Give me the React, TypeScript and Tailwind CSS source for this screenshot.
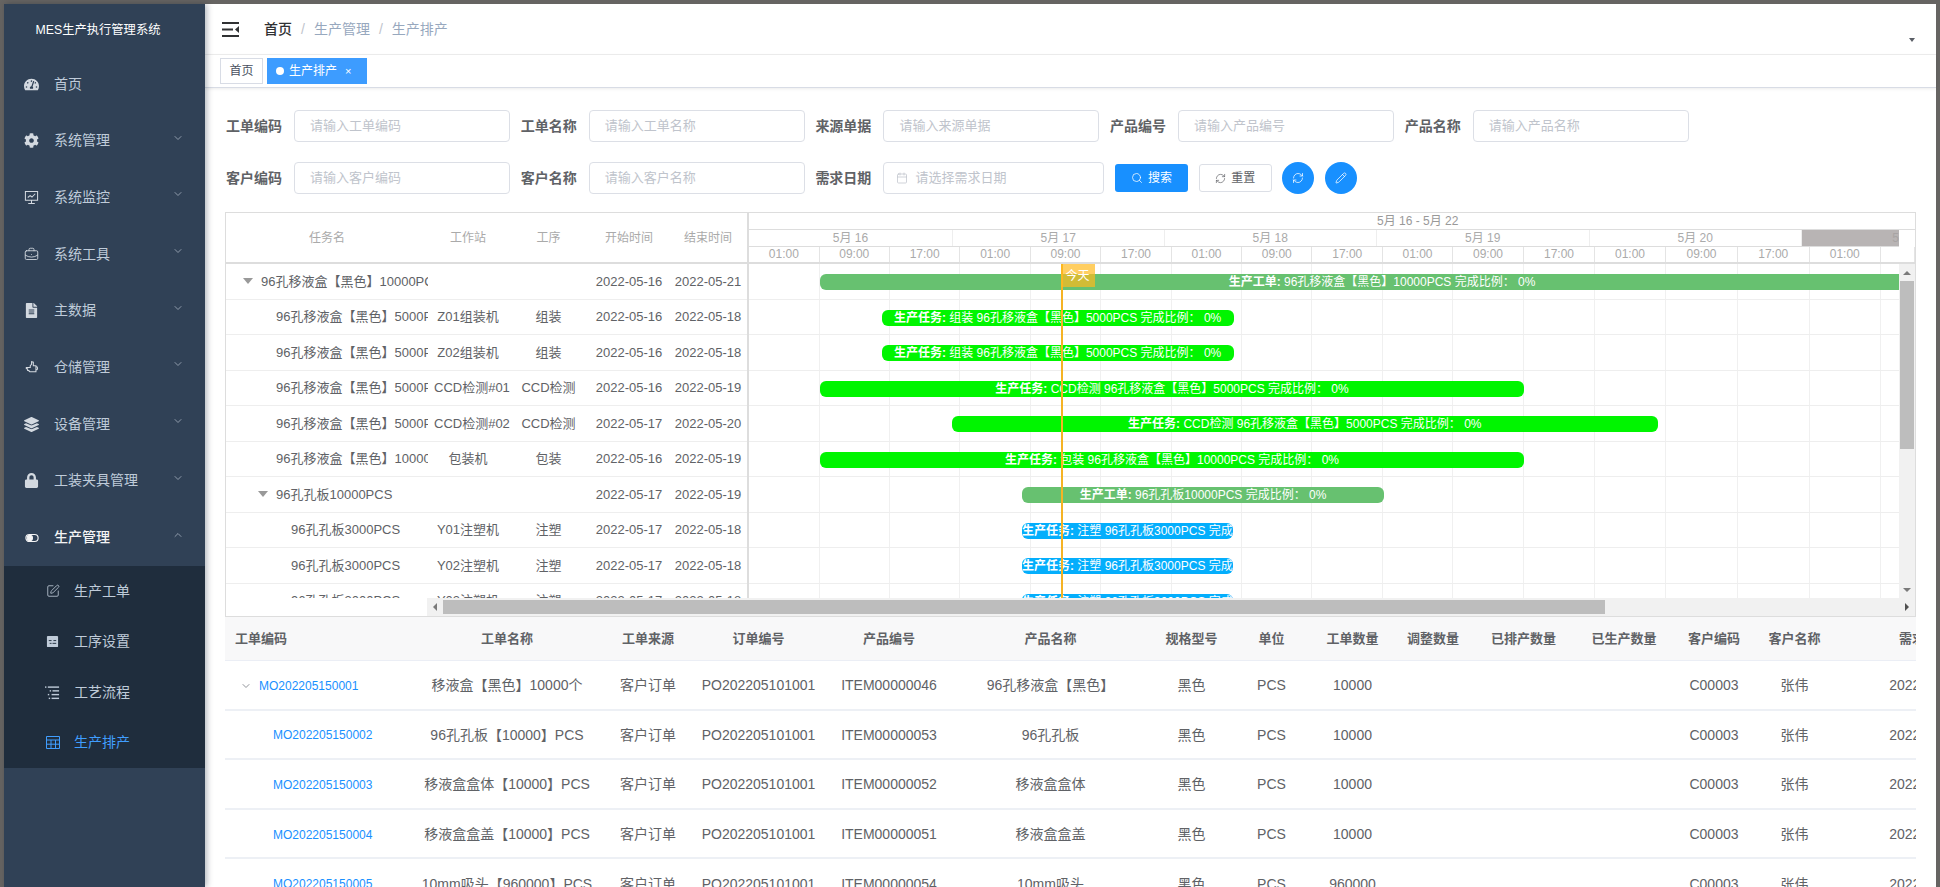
import React from 'react';
import { BriefcaseBusiness, Calendar, ChevronDown, ChevronUp, Pencil, RefreshCw, Search, SquarePen } from 'lucide-react';
import { FaCog, FaFileAlt, FaLayerGroup, FaLock, FaTachometerAlt } from 'react-icons/fa';

const MonitorIcon = () => (
  <svg width="15" height="15" viewBox="0 0 16 16" fill="none" stroke="currentColor" strokeWidth="1.1">
    <path d="M1.5 1.5h13v9.5h-13zM8 11v3M4.5 14.5h7M4 8l2.5-2 2 1.500 3.500-3.500" />
  </svg>
);

const HandIcon = () => (
  <svg width="14" height="14" viewBox="0 0 16 16" fill="none" stroke="currentColor" strokeWidth="1.2">
    <path d="M6 6.500l1.500-1.500V2l2 .5V6.500h3V13.500H6c-1 0-1.500-.5-1.500-1.500H3V10H1.500V8.500H6zM12.500 7.500c2.500 0 2.500 4 0 4" />
  </svg>
);

const ToggleIcon = () => (
  <svg width="14" height="14" viewBox="0 0 16 16" fill="none" stroke="currentColor" strokeWidth="1.3">
    <rect x="1" y="4" width="14" height="8" rx="4" />
    <circle cx="5.500" cy="8" r="3" fill="currentColor" />
  </svg>
);

const CardIcon = () => (
  <svg width="13" height="13" viewBox="0 0 14 14">
    <rect x="1" y="1" width="12" height="12" rx="1" fill="currentColor" />
    <path d="M3 6h3M8 6h3M4 9h2M7 9h4" stroke="#1f2d3d" strokeWidth="1" />
  </svg>
);

const ListIcon = () => (
  <svg width="16" height="15" viewBox="0 0 16 15" fill="currentColor">
    <rect x="0" y="1" width="1.500" height="1.500" />
    <rect x="3" y="1" width="12" height="1.500" />
    <rect x="5" y="5" width="1.500" height="1.500" />
    <rect x="8" y="5" width="7" height="1.500" />
    <rect x="3" y="9" width="1.500" height="1.500" />
    <rect x="7" y="9" width="8" height="1.500" />
    <rect x="4" y="13" width="1.500" height="1.500" />
    <rect x="7" y="13" width="8" height="1.500" />
  </svg>
);

const TableIcon = () => (
  <svg width="14" height="13" viewBox="0 0 14 13" fill="none" stroke="currentColor" strokeWidth="1">
    <path d="M.5.5h13v12H.5zM.5 4h13M.5 8.200h13M5 4v8.500M9.500 4v8.500" />
  </svg>
);

const HamburgerIcon = () => (
  <svg width="18" height="15" viewBox="0 0 18 15" fill="#303133">
    <rect x="0" y="0" width="17" height="2" />
    <rect x="0" y="6.500" width="11" height="2" />
    <rect x="0" y="13" width="17" height="2" />
    <path d="M17 4v7l-4-3.500z" />
  </svg>
);

const menus = [
  { name: '首页', icon: <FaTachometerAlt size={15} /> },
  { name: '系统管理', icon: <FaCog size={15} />, arrow: true },
  { name: '系统监控', icon: <MonitorIcon />, arrow: true },
  { name: '系统工具', icon: <BriefcaseBusiness size={15} strokeWidth={1.4} />, arrow: true },
  { name: '主数据', icon: <FaFileAlt size={15} />, arrow: true },
  { name: '仓储管理', icon: <HandIcon />, arrow: true },
  { name: '设备管理', icon: <FaLayerGroup size={15} />, arrow: true },
  { name: '工装夹具管理', icon: <FaLock size={15} />, arrow: true },
];

const subMenus = [
  { name: '生产工单', icon: <SquarePen size={14} strokeWidth={1.4} /> },
  { name: '工序设置', icon: <CardIcon /> },
  { name: '工艺流程', icon: <ListIcon /> },
  { name: '生产排产', icon: <TableIcon />, active: true },
];

const filterRow1 = [
  ['工单编码', '请输入工单编码'],
  ['工单名称', '请输入工单名称'],
  ['来源单据', '请输入来源单据'],
  ['产品编号', '请输入产品编号'],
  ['产品名称', '请输入产品名称'],
];

const filterRow2 = [
  ['客户编码', '请输入客户编码'],
  ['客户名称', '请输入客户名称'],
];

const ticks = [70.6, 70.4, 70.4, 70.6, 70, 71, 70, 70.5, 70.5, 70, 71, 71, 71, 72, 71.6, 71.4, 34];
const tickLabels = ['01:00', '09:00', '17:00', '01:00', '09:00', '17:00', '01:00', '09:00', '17:00', '01:00', '09:00', '17:00', '01:00', '09:00', '17:00', '01:00', ''];

const days = [
  { label: '5月 16', width: 204 },
  { label: '5月 17', width: 211.5 },
  { label: '5月 18', width: 212.5 },
  { label: '5月 19', width: 212.5 },
  { label: '5月 20', width: 212.5 },
];

const ORDER = 'bg-[#67c170]';
const TASK = 'bg-[#00f500]';
const INJECT = 'bg-[#04aefc]';

const tasks = [
  { name: '96孔移液盒【黑色】10000PCS', level: 0, station: '', step: '', start: '2022-05-16', end: '2022-05-21', left: 71, width: 1124, color: ORDER, text: '生产工单: 96孔移液盒【黑色】10000PCS 完成比例： 0%' },
  { name: '96孔移液盒【黑色】5000PCS', level: 1, station: 'Z01组装机', step: '组装', start: '2022-05-16', end: '2022-05-18', left: 132.6, width: 352, color: TASK, text: '生产任务: 组装 96孔移液盒【黑色】5000PCS 完成比例： 0%' },
  { name: '96孔移液盒【黑色】5000PCS', level: 1, station: 'Z02组装机', step: '组装', start: '2022-05-16', end: '2022-05-18', left: 132.6, width: 352, color: TASK, text: '生产任务: 组装 96孔移液盒【黑色】5000PCS 完成比例： 0%' },
  { name: '96孔移液盒【黑色】5000PCS', level: 1, station: 'CCD检测#01', step: 'CCD检测', start: '2022-05-16', end: '2022-05-19', left: 71, width: 704, color: TASK, text: '生产任务: CCD检测 96孔移液盒【黑色】5000PCS 完成比例： 0%' },
  { name: '96孔移液盒【黑色】5000PCS', level: 1, station: 'CCD检测#02', step: 'CCD检测', start: '2022-05-17', end: '2022-05-20', left: 202.6, width: 706.4, color: TASK, text: '生产任务: CCD检测 96孔移液盒【黑色】5000PCS 完成比例： 0%' },
  { name: '96孔移液盒【黑色】10000PCS', level: 1, station: '包装机', step: '包装', start: '2022-05-16', end: '2022-05-19', left: 71, width: 704, color: TASK, text: '生产任务: 包装 96孔移液盒【黑色】10000PCS 完成比例： 0%' },
  { name: '96孔孔板10000PCS', level: 1, parent: true, station: '', step: '', start: '2022-05-17', end: '2022-05-19', left: 273, width: 362, color: ORDER, text: '生产工单: 96孔孔板10000PCS 完成比例： 0%' },
  { name: '96孔孔板3000PCS', level: 2, station: 'Y01注塑机', step: '注塑', start: '2022-05-17', end: '2022-05-18', left: 273, width: 211, color: INJECT, text: '生产任务: 注塑 96孔孔板3000PCS 完成比例： 0%' },
  { name: '96孔孔板3000PCS', level: 2, station: 'Y02注塑机', step: '注塑', start: '2022-05-17', end: '2022-05-18', left: 273, width: 211, color: INJECT, text: '生产任务: 注塑 96孔孔板3000PCS 完成比例： 0%' },
  { name: '96孔孔板3000PCS', level: 2, station: 'Y03注塑机', step: '注塑', start: '2022-05-17', end: '2022-05-18', left: 273, width: 211, color: INJECT, text: '生产任务: 注塑 96孔孔板3000PCS 完成比例： 0%' },
];

const tableHead = ['工单编码', '工单名称', '工单来源', '订单编号', '产品编号', '产品名称', '规格型号', '单位', '工单数量', '调整数量', '已排产数量', '已生产数量', '客户编码', '客户名称', '需求日期'];

const orders = [
  ['MO202205150001', '移液盒【黑色】10000个', 'ITEM00000046', '96孔移液盒【黑色】', '10000'],
  ['MO202205150002', '96孔孔板【10000】PCS', 'ITEM00000053', '96孔孔板', '10000'],
  ['MO202205150003', '移液盒盒体【10000】PCS', 'ITEM00000052', '移液盒盒体', '10000'],
  ['MO202205150004', '移液盒盒盖【10000】PCS', 'ITEM00000051', '移液盒盒盖', '10000'],
  ['MO202205150005', '10mm吸头【960000】PCS', 'ITEM00000054', '10mm吸头', '960000'],
];

const COLS = 'grid grid-cols-[181px_202px_80px_141px_120px_203px_79px_81px_81px_80px_101px_100px_80px_81px_180px]';

function Filter({ label, placeholder }: { label: string; placeholder: string }) {
  return (
    <div className="flex items-center">
      <label className="w-[68px] text-[14px] font-bold text-[#606266]">{label}</label>
      <div className="flex h-[32px] w-[216px] items-center rounded border border-[#dcdfe6] bg-white pl-[15px] text-[13px] text-[#c0c4cc]">{placeholder}</div>
    </div>
  );
}

export default function App() {
  return (
    <div className="flex h-[887px] w-[1940px] flex-col overflow-hidden bg-[#666462] pt-[4px] pl-[4px] pr-[4px] font-['Liberation_Sans','Noto_Sans_CJK_SC',sans-serif]">
      <div className="flex min-h-0 flex-1">
        {/* Sidebar */}
        <aside className="z-10 w-[201px] shrink-0 bg-[#304156] shadow-[2px_0_6px_rgba(0,21,41,0.3)]">
          <div className="flex h-[51.7px] items-center justify-center pr-[13px] text-[12.3px] text-white">MES生产执行管理系统</div>
          {menus.map(m => (
            <div key={m.name} className="flex h-[56.7px] items-center pl-[20px] pr-[21px] text-[14px] text-[#bfcbd9]">
              <span className="flex w-[15px] justify-center text-[#d3d9e0]">{m.icon}</span>
              <span className="ml-[15px] flex-1">{m.name}</span>
              {m.arrow && <ChevronDown size={12} className="mb-[6px] text-[#8f9bab]" />}
            </div>
          ))}
          <div className="flex h-[56.7px] items-center pl-[20px] pr-[21px] text-[14px] text-[#f4f4f5]">
            <span className="flex w-[15px] justify-center"><ToggleIcon /></span>
            <span className="ml-[15px] flex-1 font-medium">生产管理</span>
            <ChevronUp size={12} className="mb-[6px] text-[#8f9bab]" />
          </div>
          <div className="bg-[#1f2d3d]">
            {subMenus.map(s => (
              <div key={s.name} className={s.active ? 'flex h-[50.5px] items-center pl-[41px] text-[14px] text-[#409eff]' : 'flex h-[50.5px] items-center pl-[41px] text-[14px] text-[#bfcbd9]'}>
                <span className="flex w-[15px] justify-center">{s.icon}</span>
                <span className="ml-[14px]">{s.name}</span>
              </div>
            ))}
          </div>
        </aside>

        <main className="flex min-w-0 flex-1 flex-col bg-white">
          {/* Navbar */}
          <div className="flex h-[51px] shrink-0 items-center border-b border-[#eeeeee] pl-[17px] pr-[21px]">
            <HamburgerIcon />
            <div className="ml-[24px] flex flex-1 items-center text-[14px]">
              <span className="font-medium text-[#303133]">首页</span>
              <span className="mx-[9px] text-[#c0c4cc]">/</span>
              <span className="text-[#97a8be]">生产管理</span>
              <span className="mx-[9px] text-[#c0c4cc]">/</span>
              <span className="text-[#97a8be]">生产排产</span>
            </div>
            <div className="mt-[22px] border-x-[3px] border-t-[4px] border-x-transparent border-t-[#5a5e66]" />
          </div>

          {/* Tabs */}
          <div className="flex h-[33px] shrink-0 items-center gap-[4px] border-b border-[#d8dce5] pl-[15px] shadow-[0_1px_3px_rgba(0,0,0,0.08)]">
            <div className="flex h-[26px] w-[43px] items-center justify-center border border-[#d8dce5] text-[12px] text-[#495060]">首页</div>
            <div className="flex h-[26px] w-[100px] items-center bg-[#3d9cff] pl-[9px] text-[12px] text-white">
              <span className="h-[8px] w-[8px] rounded-full bg-white" />
              <span className="ml-[5px]">生产排产</span>
              <span className="ml-[8px] text-[11px]">×</span>
            </div>
          </div>

          <div className="flex min-h-0 flex-1 flex-col px-[20px] pt-[22px]">
            {/* Search form */}
            <div className="flex flex-col gap-[20px] pl-[1px]">
              <div className="flex gap-[10.7px]">
                {filterRow1.map(f => <Filter key={f[0]} label={f[0]} placeholder={f[1]} />)}
              </div>
              <div className="flex items-center gap-[10.7px]">
                {filterRow2.map(f => <Filter key={f[0]} label={f[0]} placeholder={f[1]} />)}
                <div className="flex items-center">
                  <label className="w-[68px] text-[14px] font-bold text-[#606266]">需求日期</label>
                  <div className="flex h-[32px] w-[221px] items-center rounded border border-[#dcdfe6] pl-[12px] text-[13px] text-[#c0c4cc]">
                    <Calendar size={12} strokeWidth={1.5} />
                    <span className="ml-[7px]">请选择需求日期</span>
                  </div>
                </div>
                <button className="flex h-[28px] w-[73px] items-center justify-center gap-[5px] rounded-[3px] bg-[#1890ff] text-[12px] text-white">
                  <Search size={12} strokeWidth={1.5} />搜索
                </button>
                <button className="flex h-[28px] w-[73px] items-center justify-center gap-[5px] rounded-[3px] border border-[#dcdfe6] bg-white text-[12px] text-[#606266]">
                  <RefreshCw size={11} strokeWidth={1.5} />重置
                </button>
                <button className="flex h-[32px] w-[32px] items-center justify-center rounded-full bg-[#1890ff] text-white">
                  <RefreshCw size={12} strokeWidth={1.5} />
                </button>
                <button className="flex h-[32px] w-[32px] items-center justify-center rounded-full bg-[#1890ff] text-white">
                  <Pencil size={12} strokeWidth={1.5} />
                </button>
              </div>
            </div>

            {/* Gantt */}
            <div className="mt-[18px] flex h-[405px] shrink-0 flex-col border border-[#dddddd]">
              <div className="flex h-[385px] min-h-0">
                <div className="w-[523px] shrink-0 border-r-2 border-[#dddddd]">
                  <div className="flex h-[51px] items-center border-b-2 border-[#dddddd] text-[12px] text-[#aaaaaa]">
                    <div className="w-[202px] text-center">任务名</div>
                    <div className="w-[80px] text-center">工作站</div>
                    <div className="w-[81px] text-center">工序</div>
                    <div className="w-[80px] text-center">开始时间</div>
                    <div className="w-[78px] text-center">结束时间</div>
                  </div>
                  <div className="h-[334px] overflow-hidden">
                    {tasks.map((t, i) => (
                      <div key={i} className="flex h-[35.5px] shrink-0 items-center border-b border-[#eeeeee] text-[13px] text-[#606266]">
                        <div className={t.level === 0 ? 'flex w-[202px] items-center overflow-hidden whitespace-nowrap pl-[17px]' : t.level === 2 ? 'flex w-[202px] items-center overflow-hidden whitespace-nowrap pl-[65px]' : t.parent ? 'flex w-[202px] items-center overflow-hidden whitespace-nowrap pl-[32px]' : 'flex w-[202px] items-center overflow-hidden whitespace-nowrap pl-[50px]'}>
                          {(t.level === 0 || t.parent) && <span className="mr-[8px] shrink-0 border-x-[5px] border-t-[6px] border-x-transparent border-t-[#999999]" />}
                          <span>{t.name}</span>
                        </div>
                        <div className="w-[80px] whitespace-nowrap px-[6px] text-center">{t.station}</div>
                        <div className="w-[81px] whitespace-nowrap text-center">{t.step}</div>
                        <div className="w-[80px] text-center">{t.start}</div>
                        <div className="w-[78px] text-center">{t.end}</div>
                      </div>
                    ))}
                  </div>
                </div>

                <div className="flex min-w-0 flex-1 flex-col">
                  {/* Time scale */}
                  <div className="h-[51px] shrink-0 border-b-2 border-[#dddddd] text-[12px] text-[#aaaaaa]">
                    <div className="flex h-[17px] items-center border-b border-[#dddddd] pl-[628px] text-[#999999]">5月 16 - 5月 22</div>
                    <div className="h-[16.5px] w-[1150px] overflow-hidden border-b border-[#dddddd]">
                      <div className="flex h-full w-[1400px]">
                        {days.map(d => (
                          <div key={d.label} className="flex items-center justify-center border-r border-[#eeeeee]" style={{ width: d.width }}>{d.label}</div>
                        ))}
                        <div className="flex w-[216px] items-center justify-center bg-[#b8b4b4] text-[#a8a4a4]">5月 21</div>
                      </div>
                    </div>
                    <div className="flex h-[15.5px]">
                      {ticks.map((w, i) => (
                        <div key={i} className="flex shrink-0 items-center justify-center border-r border-[#e4e4e4]" style={{ width: w }}>{tickLabels[i]}</div>
                      ))}
                    </div>
                  </div>

                  <div className="flex min-h-0 flex-1">
                    <div className="relative w-[1150px] shrink-0 overflow-hidden">
                      {tasks.map((t, i) => (
                        <div key={i} className="relative flex h-[35.5px] border-b border-[#eeeeee]">
                          {ticks.map((w, j) => (
                            <div key={j} className="h-full shrink-0 border-r border-[#f0f0f0]" style={{ width: w }} />
                          ))}
                          <div className={`absolute top-[10px] h-[16px] overflow-hidden whitespace-nowrap rounded-[6px] text-center text-[12px] leading-[16px] text-white ${t.color}`} style={{ left: t.left, width: t.width }}>
                            <span className="font-bold">{t.text.slice(0, 5)}</span>{t.text.slice(5)}
                          </div>
                        </div>
                      ))}
                      <div className="absolute left-[312px] top-0 h-full w-[2px] bg-[#f5b324]" />
                      <div className="absolute left-[311.5px] top-0 flex h-[23px] w-[34px] items-center justify-center bg-[#ffb91e]/70 text-[12px] text-white">今天</div>
                    </div>
                    {/* Vertical scrollbar */}
                    <div className="flex w-[16px] flex-col items-center bg-[#f1f1f1]">
                      <div className="flex h-[17px] items-center">
                        <span className="border-x-[4px] border-b-[4px] border-x-transparent border-b-[#7a7a7a]" />
                      </div>
                      <div className="h-[168px] w-[14px] bg-[#bdbdbd]" />
                      <div className="mt-auto flex h-[17px] items-center">
                        <span className="border-x-[4px] border-t-[4px] border-x-transparent border-t-[#7a7a7a]" />
                      </div>
                    </div>
                  </div>
                </div>
              </div>

              {/* Horizontal scrollbar */}
              <div className="flex h-[18px] items-center pl-[201px]">
                <div className="flex h-full flex-1 items-center bg-[#f1f1f1]">
                  <div className="flex w-[16px] justify-center">
                    <span className="border-y-[4px] border-r-[4px] border-y-transparent border-r-[#7a7a7a]" />
                  </div>
                  <div className="h-[14px] w-[1162px] bg-[#bdbdbd]" />
                  <div className="ml-auto flex w-[16px] justify-center">
                    <span className="border-y-[4px] border-l-[4px] border-y-transparent border-l-[#505050]" />
                  </div>
                </div>
              </div>
            </div>

            {/* Work order table */}
            <div className="min-h-0 flex-1 overflow-hidden">
              <div className={`${COLS} h-[44px] w-[1809px] items-center border-b border-[#ebeef5] bg-[#f8f8f9] pt-[1px] text-center text-[13px] font-bold text-[#606266]`}>
                {tableHead.map((h, i) => (
                  <div key={h} className={i === 0 ? 'pl-[10px] text-left' : ''}>{h}</div>
                ))}
              </div>
              {orders.map((o, i) => (
                <div key={o[0]} className={`${COLS} h-[49.6px] w-[1809px] items-center border-b-2 border-[#edf0f5] pt-[2px] text-center text-[14px] text-[#606266]`}>
                  <div className={i === 0 ? 'flex items-center pl-[15px] text-left text-[12px] text-[#1890ff]' : 'pl-[48px] text-left text-[12px] text-[#1890ff]'}>
                    {i === 0 && <ChevronDown size={12} className="mr-[7px] text-[#909399]" />}
                    {o[0]}
                  </div>
                  <div className="whitespace-nowrap">{o[1]}</div>
                  <div>客户订单</div>
                  <div>PO202205101001</div>
                  <div>{o[2]}</div>
                  <div className="whitespace-nowrap">{o[3]}</div>
                  <div>黑色</div>
                  <div>PCS</div>
                  <div>{o[4]}</div>
                  <div />
                  <div />
                  <div />
                  <div>C00003</div>
                  <div>张伟</div>
                  <div>2022-05-21</div>
                </div>
              ))}
            </div>
          </div>
        </main>
      </div>
    </div>
  );
}
